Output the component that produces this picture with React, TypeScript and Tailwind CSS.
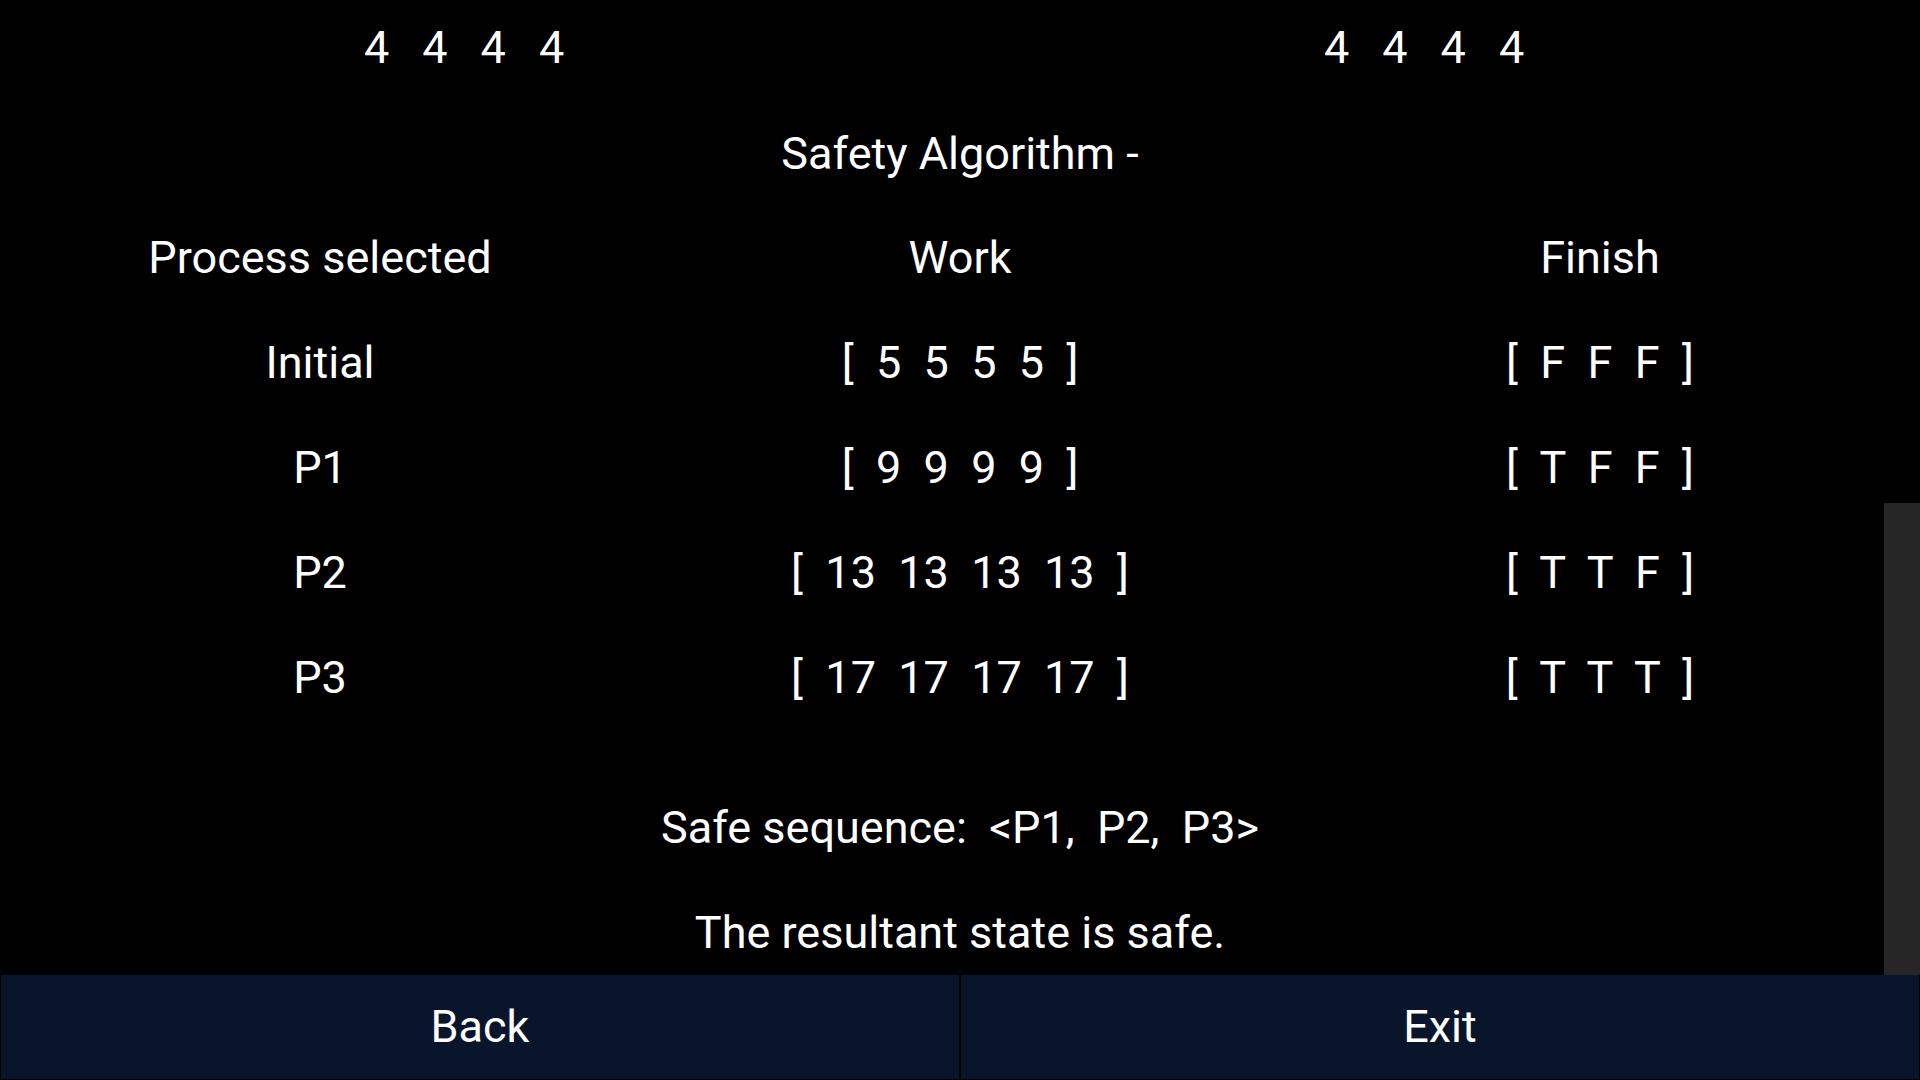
import React from "react";

type Row = {
  process: string;
  work: string;
  finish: string;
};

const rows: Row[] = [
  { process: "Initial", work: "[  5  5  5  5  ]", finish: "[  F  F  F  ]" },
  { process: "P1", work: "[  9  9  9  9  ]", finish: "[  T  F  F  ]" },
  { process: "P2", work: "[  13  13  13  13  ]", finish: "[  T  T  F  ]" },
  { process: "P3", work: "[  17  17  17  17  ]", finish: "[  T  T  T  ]" },
];

const App: React.FC = () => {
  const cell = "flex-1 flex items-center justify-center whitespace-pre";

  return (
    <main
      className="relative h-[1080px] w-[1920px] overflow-hidden bg-black text-white text-[45px] flex flex-col"
      style={{ fontFamily: "Roboto, 'Noto Sans', sans-serif" }}
    >
      {/* scrolled content */}
      <div className="relative h-[975px] overflow-hidden">
        <div className="flex h-[95px]">
          <div className="w-[960px] flex items-center pl-[364px] gap-[33px]">
            <span>4</span>
            <span>4</span>
            <span>4</span>
            <span>4</span>
          </div>
          <div className="w-[960px] flex items-center pl-[364px] gap-[33px]">
            <span>4</span>
            <span>4</span>
            <span>4</span>
            <span>4</span>
          </div>
        </div>

        <div className="h-[110px] pt-[8px] flex items-center justify-center">
          Safety Algorithm -
        </div>

        <div className="flex h-[105px]">
          <div className={cell}>Process selected</div>
          <div className={cell}>Work</div>
          <div className={cell}>Finish</div>
        </div>

        {rows.map((row) => (
          <div key={row.process} className="flex h-[105px]">
            <div className={cell}>{row.process}</div>
            <div className={cell}>{row.work}</div>
            <div className={cell}>{row.finish}</div>
          </div>
        ))}

        <div className="mt-[45px] h-[105px] flex items-center justify-center whitespace-pre">
          {"Safe sequence:  <P1,  P2,  P3>"}
        </div>
        <div className="h-[105px] flex items-center justify-center">
          The resultant state is safe.
        </div>

        {/* scrollbar thumb */}
        <div className="absolute right-0 top-[503px] h-[472px] w-[36px] bg-[#262626]" />
      </div>

      {/* bottom buttons */}
      <div className="flex h-[105px] gap-[2px] p-[1px] pt-0">
        <button className="flex-1 bg-[#09152b] text-white text-[45px] flex items-center justify-center">
          Back
        </button>
        <button className="flex-1 bg-[#09152b] text-white text-[45px] flex items-center justify-center">
          Exit
        </button>
      </div>
    </main>
  );
};

export default App;
